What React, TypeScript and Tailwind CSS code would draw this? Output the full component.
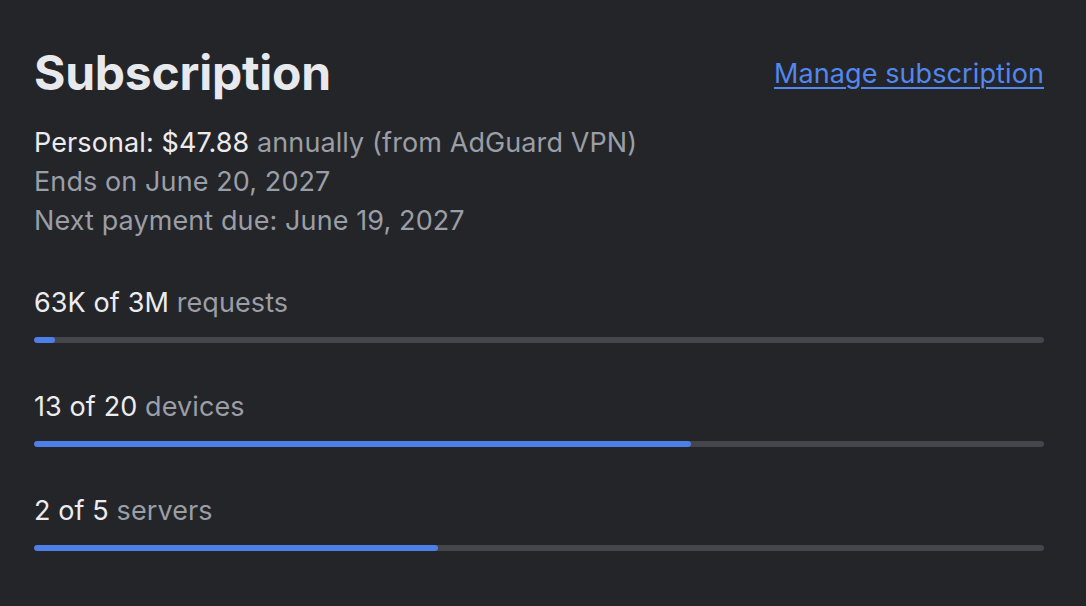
const usage = [
  { value: "63K", total: "3M", unit: "requests", pct: 2.1 },
  { value: "13", total: "20", unit: "devices", pct: 65 },
  { value: "2", total: "5", unit: "servers", pct: 40 },
];

function UsageBar({ value, total, unit, pct }: (typeof usage)[number]) {
  return (
    <div>
      <p className="text-[27px] leading-[39px] tracking-[0.1px] text-[#ececef]">
        {value} of {total} <span className="text-[#9a9ea6]">{unit}</span>
      </p>
      <div className="mt-[15px] mb-[1px] h-[6px] w-full rounded-full bg-[#44464b] overflow-hidden">
        <div className="h-full rounded-full bg-[#4d7fe9]" style={{ width: `${pct}%` }} />
      </div>
    </div>
  );
}

export default function App() {
  return (
    <div
      className="min-h-screen w-full bg-[#242529] pl-[34px] pr-[42px] pt-[44px]"
      style={{ fontFamily: "Inter, 'Noto Sans', sans-serif" }}
    >
      <div className="flex items-center justify-between">
        <h1 className="text-[48px] leading-[58px] font-bold text-[#e8e9ed] tracking-[-0.005em]">Subscription</h1>
        <a
          href="#"
          className="text-[27px] leading-[39px] tracking-[0.1px] text-[#5287f0] underline underline-offset-[4px] decoration-[2px]"
        >
          Manage subscription
        </a>
      </div>

      <div className="mt-[21px] text-[27px] leading-[39px] tracking-[0.1px] text-[#9a9ea6]">
        <p>
          <span className="text-[#ececef]">Personal: $47.88</span> annually (from AdGuard VPN)
        </p>
        <p>Ends on June 20, 2027</p>
        <p>Next payment due: June 19, 2027</p>
      </div>

      <div className="mt-[43px] flex flex-col gap-[43px]">
        {usage.map((u) => (
          <UsageBar key={u.unit} {...u} />
        ))}
      </div>
    </div>
  );
}
